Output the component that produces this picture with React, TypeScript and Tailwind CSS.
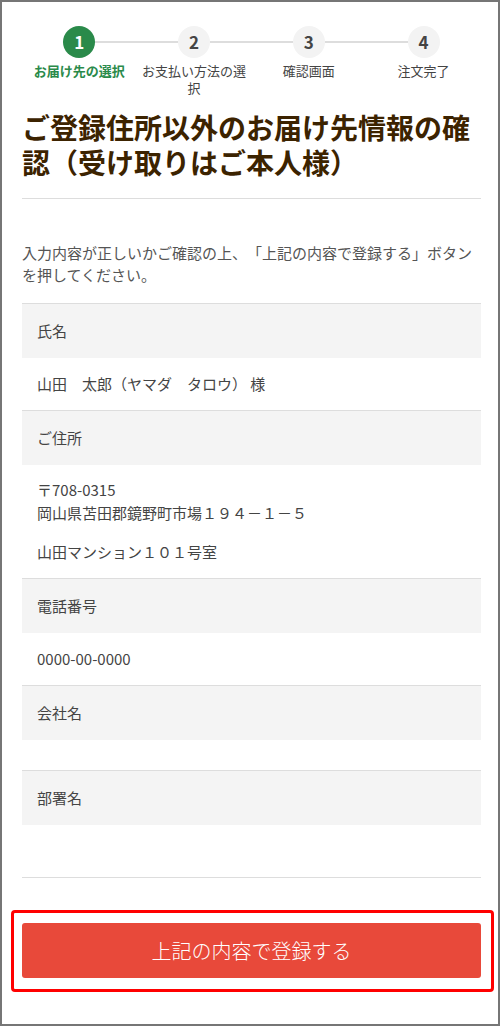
const steps = [
  { n: "1", label: "お届け先の選択", active: true },
  { n: "2", label: "お支払い方法の選択", active: false },
  { n: "3", label: "確認画面", active: false },
  { n: "4", label: "注文完了", active: false },
];

function Stepper() {
  return (
    <ol className="grid grid-cols-4 pt-[24px]">
      {steps.map((s, i) => (
        <li key={s.n} className="flex flex-col items-center">
          <div className="flex w-full items-center">
            <span className={`h-[2px] flex-1 ${i === 0 ? "bg-transparent" : "bg-[#dddddd]"}`} />
            <span
              className={`flex h-[32px] w-[32px] items-center justify-center rounded-full text-[17px] font-bold ${
                s.active ? "bg-[#2a8a4a] text-white" : "bg-[#f3f3f3] text-[#444444]"
              }`}
            >
              {s.n}
            </span>
            <span className={`h-[2px] flex-1 ${i === steps.length - 1 ? "bg-transparent" : "bg-[#dddddd]"}`} />
          </div>
          <p
            className={`mt-[4px] px-[2px] text-center text-[13px] leading-[17px] ${
              s.active ? "font-bold text-[#2a8a4a]" : "text-[#444444]"
            }`}
          >
            {s.label}
          </p>
        </li>
      ))}
    </ol>
  );
}

function Label({ children }: { children: React.ReactNode }) {
  return (
    <dt className="flex h-[55px] items-center border-t border-[#dddddd] bg-[#f4f4f4] px-[15px] text-[15px] text-[#444444]">
      {children}
    </dt>
  );
}

function Value({ children, last }: { children?: React.ReactNode; last?: boolean }) {
  return (
    <dd className={`px-[15px] py-[15px] text-[15px] leading-[22px] text-[#444444] ${last ? "border-b border-[#dddddd]" : ""}`}>
      {children}
    </dd>
  );
}

export default function App() {
  return (
    <div
      className="box-border h-[1026px] w-[500px] overflow-hidden border-2 border-[#767676] bg-white [text-spacing-trim:space-all]"
      style={{ fontFamily: '"Noto Sans CJK JP", "Noto Sans", sans-serif' }}
    >
      <div className="pl-[20px] pr-[17px]">
        <Stepper />

        <h1 className="mt-[14px] border-b border-[#dddddd] pb-[18px] text-[28px] font-bold leading-[35px] text-[#3c2300]">
          ご登録住所以外のお届け先情報の確認（受け取りはご本人様）
        </h1>

        <p className="mt-[43px] text-[15px] leading-[22px] text-[#555555]">
          入力内容が正しいかご確認の上、「上記の内容で登録する」ボタンを押してください。
        </p>

        <dl className="mt-[17px]">
          <Label>氏名</Label>
          <Value>山田　太郎（ヤマダ　タロウ） 様</Value>

          <Label>ご住所</Label>
          <dd className="px-[15px] pt-[13px] pb-[15px] text-[15px] leading-[23px] text-[#444444]">
            <p>〒708-0315</p>
            <p>岡山県苫田郡鏡野町市場１９４－１－５</p>
            <p className="mt-[16px]">山田マンション１０１号室</p>
          </dd>

          <Label>電話番号</Label>
          <Value>0000-00-0000</Value>

          <Label>会社名</Label>
          <dd className="py-[15px]" />

          <Label>部署名</Label>
          <Value last>&nbsp;</Value>
        </dl>
      </div>

      <div className="mt-[32px] ml-[9px] mr-[4px] rounded-[4px] border-[3px] border-[#ff0000] pt-[10px] pr-[10px] pb-[11px] pl-[8px]">
        <button className="flex h-[55px] w-full items-center justify-center rounded-[3px] bg-[#e8493a] text-[20px] font-light text-white">
          上記の内容で登録する
        </button>
      </div>
    </div>
  );
}
